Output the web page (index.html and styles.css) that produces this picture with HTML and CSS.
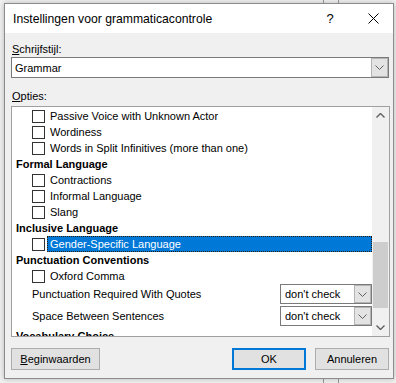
FILE: index.html
```html
<!DOCTYPE html>
<html lang="nl">
<head>
  <meta charset="UTF-8" />
  <title>Instellingen voor grammaticacontrole</title>
  <link rel="stylesheet" href="styles.css">
</head>
<body>

  <div class="dialog">
    <div class="titlebar">
      <span class="title">Instellingen voor grammaticacontrole</span>
      <span class="help">?</span>
      <span class="close">
        <svg width="11" height="11" viewBox="0 0 11 11"><path d="M0.5 0.5L10.5 10.5M10.5 0.5L0.5 10.5" stroke="#000" stroke-width="1" fill="none"/></svg>
      </span>
    </div>

    <div class="content">
      <div class="label"><u>S</u>chrijfstijl:</div>
      <div class="combo main-combo">
        <span class="combo-text">Grammar</span>
        <span class="combo-btn">
          <svg width="9" height="5" viewBox="0 0 9 5"><path d="M0.5 0.5L4.5 4.5L8.5 0.5" stroke="#606060" fill="none"/></svg>
        </span>
      </div>

      <div class="label opties"><u>O</u>pties:</div>
      <div class="listbox">
        <div class="items">
          <div class="row check"><span class="box"></span><span class="text">Passive Voice with Unknown Actor</span></div>
          <div class="row check"><span class="box"></span><span class="text">Wordiness</span></div>
          <div class="row check"><span class="box"></span><span class="text">Words in Split Infinitives (more than one)</span></div>
          <div class="row group">Formal Language</div>
          <div class="row check"><span class="box"></span><span class="text">Contractions</span></div>
          <div class="row check"><span class="box"></span><span class="text">Informal Language</span></div>
          <div class="row check"><span class="box"></span><span class="text">Slang</span></div>
          <div class="row group">Inclusive Language</div>
          <div class="row check"><span class="box"></span><span class="text selected">Gender-Specific Language</span></div>
          <div class="row group">Punctuation Conventions</div>
          <div class="row check"><span class="box"></span><span class="text">Oxford Comma</span></div>
          <div class="row option">
            <span class="text">Punctuation Required With Quotes</span>
            <div class="combo small-combo">
              <span class="combo-text">don't check</span>
              <span class="combo-btn">
                <svg width="9" height="5" viewBox="0 0 9 5"><path d="M0.5 0.5L4.5 4.5L8.5 0.5" stroke="#606060" fill="none"/></svg>
              </span>
            </div>
          </div>
          <div class="row option">
            <span class="text">Space Between Sentences</span>
            <div class="combo small-combo">
              <span class="combo-text">don't check</span>
              <span class="combo-btn">
                <svg width="9" height="5" viewBox="0 0 9 5"><path d="M0.5 0.5L4.5 4.5L8.5 0.5" stroke="#606060" fill="none"/></svg>
              </span>
            </div>
          </div>
          <div class="row group">Vocabulary Choice</div>
        </div>
        <div class="scrollbar">
          <span class="arrow">
            <svg width="9" height="5" viewBox="0 0 9 5"><path d="M0.5 4.5L4.5 0.5L8.5 4.5" stroke="#606060" stroke-width="1.4" fill="none"/></svg>
          </span>
          <span class="track"><span class="thumb"></span></span>
          <span class="arrow">
            <svg width="9" height="5" viewBox="0 0 9 5"><path d="M0.5 0.5L4.5 4.5L8.5 0.5" stroke="#606060" stroke-width="1.4" fill="none"/></svg>
          </span>
        </div>
      </div>

      <div class="buttons">
        <button class="btn reset"><u>B</u>eginwaarden</button>
        <span class="spacer"></span>
        <button class="btn default">OK</button>
        <button class="btn">Annuleren</button>
      </div>
    </div>
  </div>

</body>
</html>
```

FILE: styles.css
```css
html, body {
  height: 100%;
}

body {
  margin: 0;
  font-family: 'Segoe UI', 'Liberation Sans', sans-serif;
  font-size: 11px;
  color: #000;
  background-color: #f2f2f2;
  /* window edges behind the dialog */
  background-image:
    linear-gradient(#9a9a9a, #9a9a9a),
    linear-gradient(#9a9a9a, #9a9a9a);
  background-size: 1px 100%, 1px 100%;
  background-position: 323px 0, 338px 0;
  background-repeat: no-repeat;
  padding: 3px 0 0 4px;
  box-sizing: border-box;
}

.dialog {
  width: 390px;
  height: 376px;
  box-sizing: border-box;
  background: #f0f0f0;
  border: 1px solid #8c8c8c;
  box-shadow: 0 0 6px rgba(0, 0, 0, 0.25);
  display: flex;
  flex-direction: column;
}

.titlebar {
  height: 29px;
  flex-shrink: 0;
  background: #fff;
  display: flex;
  align-items: center;
  padding-left: 8px;
  font-size: 12.2px;
}

.title {
  flex: 1;
}

.help {
  width: 46px;
  text-align: center;
  font-size: 13px;
}

.close {
  width: 40px;
  display: flex;
  justify-content: center;
}

.content {
  flex: 1;
  padding: 0 3px 0 6px;
  display: flex;
  flex-direction: column;
}

.label {
  height: 15px;
  line-height: 15px;
  margin-top: 9px;
  padding-left: 1px;
}

.opties {
  margin-top: 11px;
}

.combo {
  display: flex;
  align-items: center;
  background: #fff;
  border: 1px solid #7a7a7a;
  box-sizing: border-box;
}

.combo-text {
  flex: 1;
  padding-left: 3px;
  white-space: nowrap;
}

.combo-btn {
  align-self: stretch;
  width: 17px;
  background: #e3e3e3;
  border: 1px solid #b4b4b4;
  box-sizing: border-box;
  display: flex;
  align-items: center;
  justify-content: center;
}

.main-combo {
  height: 21px;
  margin-right: 1px;
}

.listbox {
  margin-top: 2px;
  height: 231px;
  box-sizing: border-box;
  border: 1px solid #a0a0a0;
  background: #fff;
  display: flex;
  overflow: hidden;
}

.items {
  flex: 1;
  padding-top: 1px;
  overflow: hidden;
}

.row {
  height: 16px;
  display: flex;
  align-items: center;
  white-space: nowrap;
}

.row.group {
  font-weight: bold;
  padding-left: 4px;
}

.row.check {
  padding-left: 20px;
}

.box {
  width: 13px;
  height: 13px;
  box-sizing: border-box;
  border: 1px solid #333;
  background: #fff;
  margin-right: 2px;
}

.row .text {
  padding: 0 2px;
  line-height: 14px;
  border: 1px solid transparent;
}

.row .text.selected {
  flex: 1;
  background: #0078d7;
  color: #fff;
  border: 1px dotted #2a1a00;
}

.row.option {
  height: 22px;
  padding-left: 20px;
  align-items: flex-start;
}

.row.option .text {
  flex: 1;
  padding-left: 0;
  line-height: 20px;
  border: 0;
}

.small-combo {
  width: 92px;
  height: 20px;
}

.small-combo .combo-text {
  padding-left: 4px;
}

.scrollbar {
  width: 17px;
  background: #f0f0f0;
  display: flex;
  flex-direction: column;
}

.arrow {
  height: 17px;
  display: flex;
  align-items: center;
  justify-content: center;
}

.track {
  flex: 1;
  position: relative;
}

.thumb {
  position: absolute;
  left: 1px;
  right: 1px;
  top: 118px;
  height: 66px;
  background: #cdcdcd;
}

.buttons {
  display: flex;
  margin-top: 11px;
  gap: 9px;
  padding-right: 1px;
}

.spacer {
  flex: 1;
}

.btn {
  font-family: inherit;
  font-size: 11px;
  color: #000;
  height: 22px;
  width: 74px;
  padding: 0;
  background: #e1e1e1;
  border: 1px solid #adadad;
  box-sizing: border-box;
}

.btn.reset {
  width: 89px;
}

.btn.default {
  border: 2px solid #0078d7;
}
```
